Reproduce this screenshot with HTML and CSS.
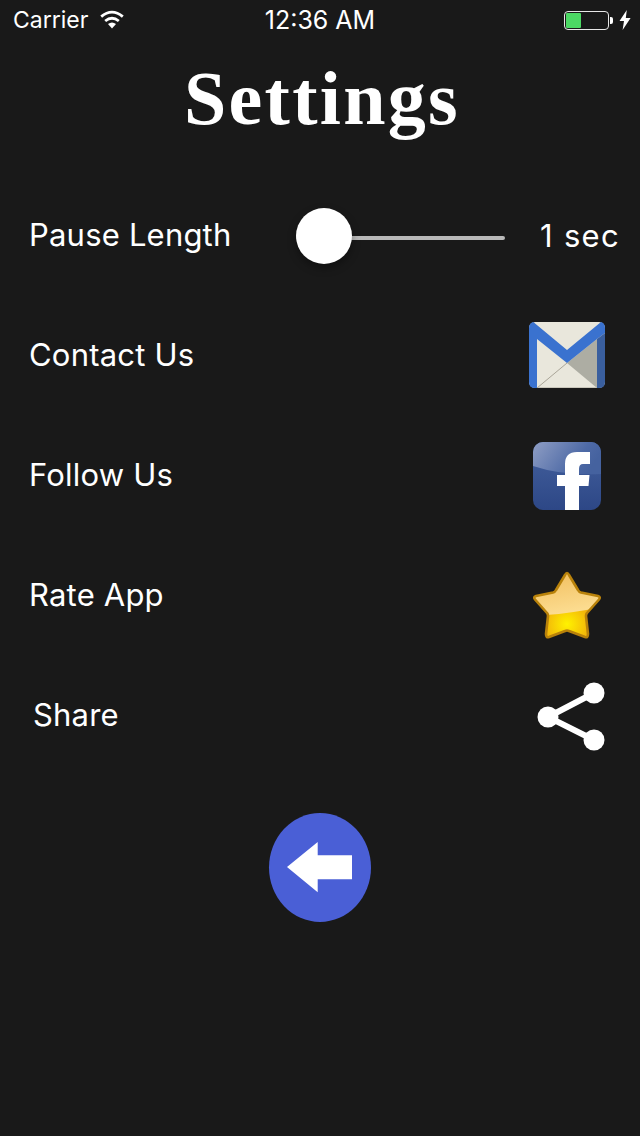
FILE: index.html
```html
<!DOCTYPE html>
<html lang="en">
<head>
<meta charset="utf-8">
<title>Settings</title>
<link rel="stylesheet" href="styles.css">
</head>
<body>
<div class="screen">
  <header class="status">
    <div class="status-left">
      <span class="carrier">Carrier</span>
      <svg class="wifi" width="24" height="19" viewBox="0 0 24 19">
        <path d="M12 18.500 L8 14 Q12 10.800 16 14 Z" fill="#fff"/>
        <path d="M5.200 11 Q12 5.400 18.800 11" fill="none" stroke="#fff" stroke-width="2.800"/>
        <path d="M1.200 6.600 Q12 -2.400 22.800 6.600" fill="none" stroke="#fff" stroke-width="2.800"/>
      </svg>
    </div>
    <span class="time">12:36 AM</span>
    <div class="status-right">
      <div class="battery"><div class="battery-fill"></div></div>
      <div class="battery-nub"></div>
      <svg class="bolt" width="12" height="20" viewBox="0 0 12 20">
        <path d="M7.800 0 L0.500 11 H5 L3.600 20 L11.600 8 H6.800 Z" fill="#fff"/>
      </svg>
    </div>
  </header>

  <h1 class="title">Settings</h1>

  <main class="rows">
    <div class="row">
      <span class="label">Pause Length</span>
      <div class="slider">
        <div class="track"></div>
        <div class="thumb"></div>
      </div>
      <span class="value">1 sec</span>
    </div>

    <div class="row">
      <span class="label">Contact Us</span>
      <div class="icon icon-mail">
        <svg width="76" height="66" viewBox="0 0 76 66">
          <rect width="76" height="66" rx="6" fill="#e9e7dc"/>
          <path d="M68 17 L38 41 L68 66 Z" fill="#adada3"/>
          <path d="M38 41 L8 66" stroke="#a9a598" stroke-width="1" fill="none"/>
          <path d="M8 65.400 H68 V66 H8 Z" fill="#a9a598"/>
          <path d="M4.300 0 L38 28 L72 0 Q76 1 76 6 V11 L68 17 L38 41 L8 17 V66 H6 Q0 66 0 60 V6 Q0 1 4.300 0 Z" fill="#3a72cf"/>
          <path d="M68 17 L76 11 V60 Q76 66 70 66 H68 Z" fill="#3a5f9e"/>
        </svg>
      </div>
    </div>

    <div class="row">
      <span class="label">Follow Us</span>
      <div class="icon">
        <svg width="68" height="68" viewBox="0 0 68 68">
          <defs>
            <linearGradient id="fbBase" x1="0" y1="0" x2="0" y2="1">
              <stop offset="0" stop-color="#45629f"/>
              <stop offset="1" stop-color="#2d4786"/>
            </linearGradient>
            <linearGradient id="fbGloss" x1="0" y1="0" x2="1" y2="0.35">
              <stop offset="0" stop-color="#8f9ec4"/>
              <stop offset="0.75" stop-color="#4e6aa6"/>
              <stop offset="1" stop-color="#45629f"/>
            </linearGradient>
            <clipPath id="fbClip"><rect width="68" height="68" rx="10"/></clipPath>
          </defs>
          <g clip-path="url(#fbClip)">
            <rect width="68" height="68" fill="url(#fbBase)"/>
            <path d="M0 0 H68 V32 Q30 34 0 24 Z" fill="url(#fbGloss)"/>
            <path d="M32 68 V44 H24 V33 H32 V22 Q32 10 44 10 H57 V22 H50 Q46 22 46 27 V33 H56.500 L55.500 44 H46 V68 Z" fill="#fff"/>
          </g>
        </svg>
      </div>
    </div>

    <div class="row">
      <span class="label">Rate App</span>
      <div class="icon icon-star">
        <svg width="72" height="70" viewBox="-1 -1 72 70">
          <defs>
            <linearGradient id="starTop" x1="0" y1="0" x2="0.3" y2="1">
              <stop offset="0" stop-color="#f0bc5a"/>
              <stop offset="1" stop-color="#fcdc90"/>
            </linearGradient>
            <radialGradient id="starLow" cx="0.5" cy="0.78" r="0.42">
              <stop offset="0" stop-color="#fff200"/>
              <stop offset="1" stop-color="#eea20c"/>
            </radialGradient>
            <clipPath id="starClip"><path d="M35 2 Q36 2 37 4 L46 19 Q47 21 49 21.500 L66 25 Q69 26 67 28.500 L55 42 Q54 43 54 45 L56 63 Q56 67 53 66 L37 60 Q35 59 33 60 L17 66 Q14 67 14 63 L16 45 Q16 43 15 42 L3 28.500 Q1 26 4 25 L21 21.500 Q23 21 24 19 L33 4 Q34 2 35 2 Z"/></clipPath>
          </defs>
          <g clip-path="url(#starClip)">
            <rect width="70" height="68" fill="url(#starLow)"/>
            <path d="M0 0 H70 V36 Q40 42 14 44 L0 30 Z" fill="url(#starTop)"/>
          </g>
          <path d="M35 2 Q36 2 37 4 L46 19 Q47 21 49 21.500 L66 25 Q69 26 67 28.500 L55 42 Q54 43 54 45 L56 63 Q56 67 53 66 L37 60 Q35 59 33 60 L17 66 Q14 67 14 63 L16 45 Q16 43 15 42 L3 28.500 Q1 26 4 25 L21 21.500 Q23 21 24 19 L33 4 Q34 2 35 2 Z" fill="none" stroke="#b9820a" stroke-width="2.600" stroke-linejoin="round"/>
        </svg>
      </div>
    </div>

    <div class="row">
      <span class="label label-share">Share</span>
      <div class="icon icon-share">
        <svg width="76" height="70" viewBox="0 0 76 70">
          <path d="M65 11 L19 35 L65 58" fill="none" stroke="#fff" stroke-width="6"/>
          <circle cx="65" cy="11" r="10.500" fill="#fff"/>
          <circle cx="19" cy="35" r="10.500" fill="#fff"/>
          <circle cx="65" cy="58" r="10.500" fill="#fff"/>
        </svg>
      </div>
    </div>
  </main>

  <div class="back-wrap">
    <button class="back" type="button" aria-label="Back">
      <svg class="back-arrow" width="65" height="51" viewBox="0 0 65 51">
        <path d="M0 25 L30.700 0 V13.300 H65 V37.300 H30.700 V50.300 Z" fill="#fff"/>
      </svg>
    </button>
  </div>
</div>
</body>
</html>
```

FILE: styles.css
```css
* {
  box-sizing: border-box;
}

html,
body {
  margin: 0;
  padding: 0;
  background: #191919;
}

.screen {
  width: 640px;
  height: 1136px;
  overflow: hidden;
  background: #191919;
  color: #fff;
  font-family: Inter, Roboto, "Liberation Sans", sans-serif;
}

.status {
  display: grid;
  grid-template-columns: 1fr auto 1fr;
  align-items: center;
  height: 40px;
  padding: 0 9px 0 13px;
  font-size: 23px;
}

.time {
  font-size: 25px;
  margin-right: 4px;
}

.status-left {
  display: flex;
  align-items: center;
  gap: 12px;
}

.wifi {
  margin-top: -2px;
}

.status-right {
  display: flex;
  align-items: center;
  justify-content: flex-end;
}

.battery {
  width: 45px;
  height: 19px;
  padding: 1px;
  border: 1px solid #e8e8e8;
  border-radius: 4px;
}

.battery-fill {
  width: 15px;
  height: 100%;
  background: #4cd964;
  border-radius: 1px;
}

.battery-nub {
  width: 3px;
  height: 7px;
  margin-left: 1px;
  background: #fff;
  border-radius: 0 2px 2px 0;
}

.bolt {
  margin-left: 6px;
}

.title {
  margin: 0;
  height: 136px;
  padding: 12px 0 0 4px;
  text-align: center;
  font-family: "Liberation Serif", serif;
  font-size: 76px;
  line-height: 92px;
  font-weight: 700;
  letter-spacing: 2.3px;
}

.rows {
  display: flex;
  flex-direction: column;
}

.row {
  display: flex;
  align-items: center;
  justify-content: space-between;
  height: 120px;
  padding: 0 20px 0 29px;
}

.label {
  font-size: 31px;
  line-height: 40px;
  margin-top: -2px;
  letter-spacing: 0.2px;
}

.label-share {
  margin-left: 4px;
}

.slider {
  position: relative;
  display: flex;
  align-items: center;
  width: 209px;
  height: 56px;
  margin-left: 64px;
}

.track {
  width: 100%;
  height: 4px;
  margin-top: 4px;
  background: #b9b9b9;
  border-radius: 2px;
}

.thumb {
  position: absolute;
  left: 0;
  top: 0;
  width: 56px;
  height: 56px;
  background: #fff;
  border-radius: 50%;
  box-shadow: 0 4px 8px rgba(0, 0, 0, 0.35);
}

.value {
  margin-left: auto;
  font-size: 31px;
  line-height: 40px;
  letter-spacing: 1.3px;
}

.icon {
  display: flex;
  justify-content: center;
  width: 76px;
  margin-right: 15px;
}

.icon-mail svg {
  margin-top: -2px;
}

.icon-star svg {
  margin-top: 18px;
}

.icon-share svg {
  margin-top: 1px;
}

.back-wrap {
  display: flex;
  justify-content: center;
  padding-top: 37px;
}

.back {
  display: flex;
  align-items: center;
  justify-content: center;
  width: 102px;
  height: 109px;
  padding: 0;
  border: 0;
  border-radius: 50%;
  background: #4a5fd6;
}

.back-arrow {
  margin-right: 1px;
}
```
